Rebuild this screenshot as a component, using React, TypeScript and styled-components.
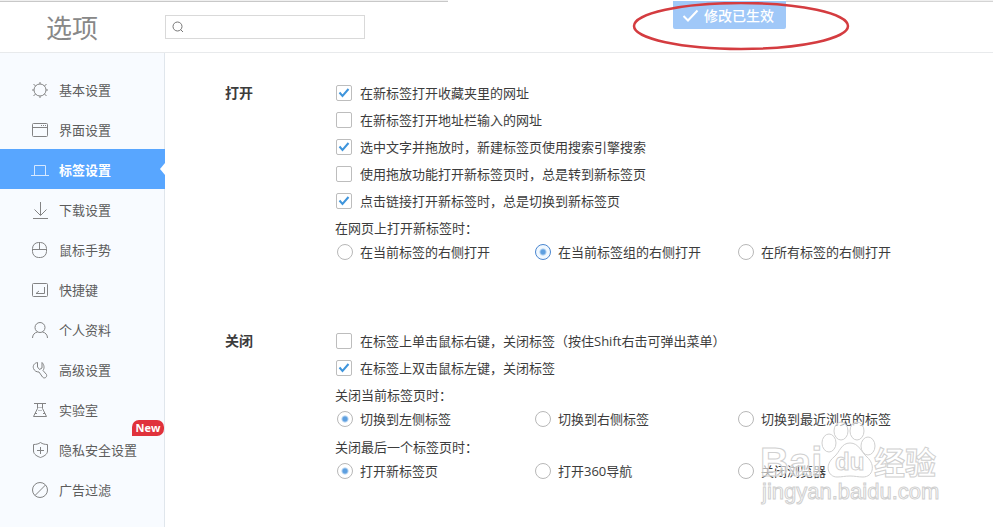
import React from 'react';
import styled, { createGlobalStyle, css } from 'styled-components';

const GlobalStyle = createGlobalStyle`
  * { box-sizing: border-box; }
  body {
    margin: 0;
    background: #fff;
    color: #3c3c3c;
    font-family: "Open Sans", "Noto Sans CJK SC", sans-serif;
    font-size: 13px;
    line-height: 20px;
  }
`;

const Page = styled.div`
  position: relative;
  display: flex;
  flex-direction: column;
  min-height: 100vh;
  overflow: hidden;
`;

const WindowEdge = styled.div`
  display: flex;
  justify-content: space-between;
  height: 2px;
`;

const EdgeLine = styled.div<{ $width: number; $color: string }>`
  width: ${(p) => p.$width}px;
  border-top: 1px solid #f0f0f0;
  border-bottom: 1px solid ${(p) => p.$color};
`;

const Header = styled.header`
  position: relative;
  display: flex;
  align-items: center;
  height: 51px;
  padding-left: 46px;
  border-bottom: 1px solid #e8eaec;
`;

const Title = styled.h1`
  width: 119px;
  margin: 0;
  padding-top: 2px;
  font-size: 26px;
  font-weight: 400;
  line-height: 40px;
  color: #888;
`;

const SearchBox = styled.label`
  display: flex;
  align-items: center;
  gap: 6px;
  width: 200px;
  height: 24px;
  padding: 0 6px;
  border: 1px solid #d9d9d9;
`;

const SearchInput = styled.input`
  flex: 1;
  min-width: 0;
  border: 0;
  outline: 0;
  background: transparent;
  font: inherit;
`;

const Toast = styled.div`
  position: absolute;
  top: -1px;
  left: 673px;
  display: flex;
  align-items: center;
  gap: 5px;
  height: 28px;
  padding: 2px 12px 0 9px;
  border-radius: 0 0 2px 2px;
  background: #a0c8f8;
  color: #fff;
  font-size: 14px;
  font-weight: 500;
`;

const Highlight = styled.svg`
  position: absolute;
  top: 0;
  left: 632px;
  pointer-events: none;
`;

const Body = styled.div`
  display: flex;
  flex: 1;
`;

const Sidebar = styled.nav`
  flex: 0 0 165px;
  padding-top: 16px;
  border-right: 1px solid #e0e6ec;
  background: #f8fbff;
`;

const NavItem = styled.a<{ $active?: boolean }>`
  position: relative;
  display: flex;
  align-items: center;
  gap: 10px;
  height: 40px;
  padding: 1px 0 0 31px;
  color: #5c5c5c;
  text-decoration: none;
  ${(p) =>
    p.$active &&
    css`
      margin-right: -1px;
      background: #58a6ff;
      color: #fff;
      font-weight: 700;
      &::after {
        content: '';
        position: absolute;
        top: 14px;
        right: 0;
        border: 6px solid transparent;
        border-left-width: 0;
        border-right: 5px solid #fff;
      }
    `}
`;

const NavIcon = styled.svg`
  flex: none;
  width: 18px;
  height: 18px;
  fill: none;
  stroke: currentColor;
  stroke-width: 1;
  opacity: 0.75;
`;

const NewBadge = styled.span`
  position: absolute;
  top: -9px;
  left: 132px;
  width: 32px;
  border-radius: 7px 7px 7px 0;
  background: #e0323c;
  color: #fff;
  font-size: 11px;
  font-weight: 700;
  line-height: 16px;
  text-align: center;
`;

const Main = styled.main`
  display: flex;
  flex: 1;
  flex-direction: column;
  gap: 61px;
  padding: 26px 40px 20px 60px;
`;

const Section = styled.section`
  display: flex;
`;

const SectionTitle = styled.h2`
  flex: 0 0 110px;
  margin: 0;
  font-size: 14px;
  font-weight: 700;
  line-height: 27px;
`;

const Options = styled.div`
  flex: 1;
`;

const CheckRow = styled.label`
  display: flex;
  align-items: center;
  gap: 8px;
  height: 27px;
  padding-left: 1px;
`;

const CheckBox = styled.input`
  appearance: none;
  flex: none;
  width: 16px;
  height: 16px;
  margin: 0;
  border: 1px solid #bdbdbd;
  border-radius: 2px;
  background: #fff;
  &:checked {
    background: center / 14px 14px no-repeat
      url("data:image/svg+xml,%3Csvg xmlns='http://www.w3.org/2000/svg' viewBox='0 0 14 14'%3E%3Cpath d='M2.5 6.5 5.5 10 11.5 3' fill='none' stroke='%233f95dc' stroke-width='2'/%3E%3C/svg%3E");
  }
`;

const RadioSet = styled.fieldset`
  display: grid;
  grid-template-columns: 198px 203px 1fr;
  min-width: 0;
  margin: 0 0 4px;
  padding: 0;
  border: 0;
`;

const Legend = styled.legend`
  padding: 0;
  line-height: 28px;
`;

const RadioItem = styled.label`
  display: flex;
  align-items: center;
  gap: 7px;
  height: 20px;
  padding-left: 2px;
`;

const Radio = styled.input<{ $focused?: boolean }>`
  appearance: none;
  flex: none;
  width: 16px;
  height: 16px;
  margin: 0;
  border: 1px solid ${(p) => (p.$focused ? '#4a86d0' : '#b8b8b8')};
  border-radius: 50%;
  &:checked {
    background: radial-gradient(circle, #5d9fe0 0 2px, ${(p) => (p.$focused ? '#f0f8ff' : '#fff')} 4px);
  }
`;

const Watermark = styled.svg`
  position: absolute;
  right: 48px;
  bottom: 17px;
  pointer-events: none;
  fill: #fff;
  fill-opacity: 0.6;
  stroke: #d0d0d0;
  stroke-width: 1;
`;

const icons: Record<string, React.ReactNode> = {
  gear: (
    <>
      <circle cx="9" cy="9" r="6" />
      <path d="M9 1v2M9 15v2M1 9h2M15 9h2M2.500 3l2 2M13.500 13l2 2M15.500 3l-2 2M4.500 13l-2 2" />
    </>
  ),
  window: (
    <>
      <rect x="1.500" y="2.500" width="15" height="13" rx="1" />
      <path d="M1.500 6.500h15M10 4.500h1M12 4.500h1M14 4.500h1" />
    </>
  ),
  tab: <path d="M0 14.500h18M3.500 14.500V4.500h11v10" />,
  download: <path d="M9.500 1v13M3.500 8.500l6 6 6-6M2 17.500h15" />,
  mouse: (
    <>
      <rect x="1.500" y="1.500" width="14" height="15" rx="6" />
      <path d="M1.500 8.500h14M8.500 1.500v7" />
    </>
  ),
  key: (
    <>
      <rect x="1.500" y="2.500" width="15" height="13" rx="1" />
      <path d="M13.500 6v6.500H6M8 10l-3 2.500h3" />
    </>
  ),
  user: (
    <>
      <circle cx="9" cy="6.500" r="5" />
      <path d="M1.500 17c0-3 2-5.500 5-6M16.500 17c0-3-2-5.500-5-6" />
    </>
  ),
  wrench: (
    <path d="M6.500 1.500C3.500 2 1.500 4.500 2.500 7.500c1 2.500 3 3.500 5.500 3.500l3.500 5c1.500 2 5 .5 4-2.500l-3.500-4c1.500-2 1.500-5.500-1-8v5.500L8.500 8.500 6.500 6z" />
  ),
  lab: (
    <>
      <path d="M3 2.500h12M6.500 2.500v5l-4 8h13l-4-8v-5M4 12.500h2M12 12.500h2" />
      <path d="M7.500 6.500h3M7.500 9.500h3" strokeDasharray="1 1" />
    </>
  ),
  shield: (
    <>
      <path d="M9.500 1.500c2 1.500 4.500 2 7 2v6.500c0 3.500-4 5.500-7 6.500-3-1-7-3-7-6.500V3.500c2.500 0 5-.5 7-2z" />
      <path d="M6 9.500h7M9.500 6v7" />
    </>
  ),
  block: (
    <>
      <circle cx="9" cy="9" r="7.500" />
      <path d="M4 14.500 14.500 4" />
    </>
  ),
};

const navItems = [
  { icon: 'gear', text: '基本设置' },
  { icon: 'window', text: '界面设置' },
  { icon: 'tab', text: '标签设置', active: true },
  { icon: 'download', text: '下载设置' },
  { icon: 'mouse', text: '鼠标手势' },
  { icon: 'key', text: '快捷键' },
  { icon: 'user', text: '个人资料' },
  { icon: 'wrench', text: '高级设置' },
  { icon: 'lab', text: '实验室' },
  { icon: 'shield', text: '隐私安全设置', badge: 'New' },
  { icon: 'block', text: '广告过滤' },
];

function Check({ text, on }: { text: string; on?: boolean }) {
  return (
    <CheckRow>
      <CheckBox type="checkbox" defaultChecked={on} />
      {text}
    </CheckRow>
  );
}

function Radios({ name, title, items, selected, focused }: {
  name: string;
  title: string;
  items: string[];
  selected: number;
  focused?: boolean;
}) {
  return (
    <RadioSet>
      <Legend>{title}</Legend>
      {items.map((item, i) => (
        <RadioItem key={item}>
          <Radio type="radio" name={name} defaultChecked={i === selected} $focused={focused && i === selected} />
          {item}
        </RadioItem>
      ))}
    </RadioSet>
  );
}

export default function App() {
  return (
    <Page>
      <GlobalStyle />
      <WindowEdge>
        <EdgeLine $width={448} $color="#c8c8c8" />
        <EdgeLine $width={207} $color="#d4d4d4" />
      </WindowEdge>
      <Header>
        <Title>选项</Title>
        <SearchBox>
          <svg width="12" height="12" viewBox="0 0 12 12" fill="none" stroke="#777">
            <circle cx="5.500" cy="5.500" r="4.500" />
            <path d="M8.500 8.500 11 11" />
          </svg>
          <SearchInput type="text" aria-label="搜索" />
        </SearchBox>
        <Toast role="status">
          <svg width="17" height="14" viewBox="0 0 17 14" fill="none" stroke="#fff" strokeWidth="2">
            <path d="M1.500 7 6 11.500 15.500 1.500" />
          </svg>
          修改已生效
        </Toast>
        <Highlight width="218" height="50" viewBox="0 0 218 50" fill="none" stroke="#d43c40" strokeWidth="2.500">
          <ellipse cx="109" cy="24" rx="107" ry="23" />
        </Highlight>
      </Header>
      <Body>
        <Sidebar>
          {navItems.map((n) => (
            <NavItem key={n.text} href="#" $active={n.active}>
              <NavIcon viewBox="0 0 18 18">{icons[n.icon]}</NavIcon>
              {n.text}
              {n.badge && <NewBadge>{n.badge}</NewBadge>}
            </NavItem>
          ))}
        </Sidebar>
        <Main>
          <Section>
            <SectionTitle>打开</SectionTitle>
            <Options>
              <Check text="在新标签打开收藏夹里的网址" on />
              <Check text="在新标签打开地址栏输入的网址" />
              <Check text="选中文字并拖放时，新建标签页使用搜索引擎搜索" on />
              <Check text="使用拖放功能打开新标签页时，总是转到新标签页" />
              <Check text="点击链接打开新标签时，总是切换到新标签页" on />
              <Radios
                name="open-position"
                title="在网页上打开新标签时："
                items={['在当前标签的右侧打开', '在当前标签组的右侧打开', '在所有标签的右侧打开']}
                selected={1}
                focused
              />
            </Options>
          </Section>
          <Section>
            <SectionTitle>关闭</SectionTitle>
            <Options>
              <Check text="在标签上单击鼠标右键，关闭标签（按住Shift右击可弹出菜单）" />
              <Check text="在标签上双击鼠标左键，关闭标签" on />
              <Radios
                name="close-current"
                title="关闭当前标签页时："
                items={['切换到左侧标签', '切换到右侧标签', '切换到最近浏览的标签']}
                selected={0}
              />
              <Radios
                name="close-last"
                title="关闭最后一个标签页时："
                items={['打开新标签页', '打开360导航', '关闭浏览器']}
                selected={0}
              />
            </Options>
          </Section>
        </Main>
      </Body>
      <Watermark width="190" height="90" viewBox="0 0 190 90">
        <text x="5" y="56" fontFamily="Liberation Sans" fontWeight="700" fontSize="40">Bai</text>
        <ellipse cx="74" cy="23" rx="7" ry="9" />
        <ellipse cx="86" cy="11" rx="7" ry="9" />
        <ellipse cx="102" cy="11" rx="7" ry="9" />
        <ellipse cx="113" cy="26" rx="7" ry="9" />
        <path d="M95 23c-9 0-10 9-16 14-10 8-6 20 3 20 5 0 8-1 13-1s8 1 13 1c10 0 13-12 4-20-6-5-8-14-17-14z" />
        <text x="80" y="50" fontFamily="Liberation Sans" fontWeight="700" fontSize="24">du</text>
        <text x="119" y="54" fontFamily="Noto Sans CJK SC" fontWeight="700" fontSize="31">经验</text>
        <text x="7" y="79" fontFamily="Liberation Sans" fontSize="22">jingyan.baidu.com</text>
      </Watermark>
    </Page>
  );
}
